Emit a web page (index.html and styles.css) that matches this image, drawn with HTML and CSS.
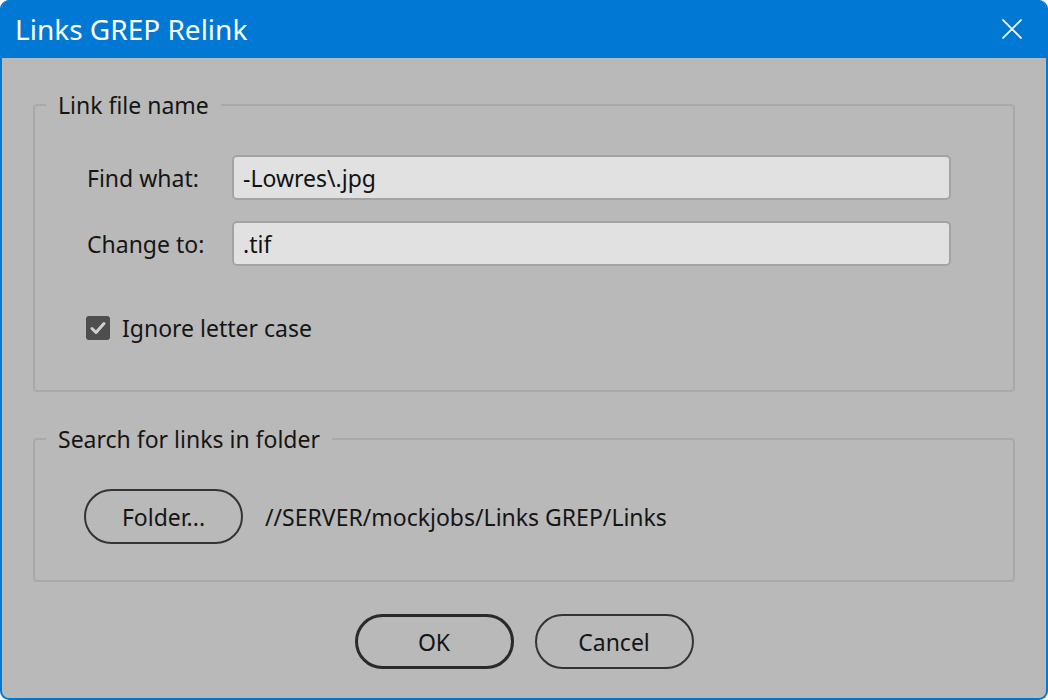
FILE: index.html
```html
<!DOCTYPE html>
<html lang="en">
<head>
    <meta charset="UTF-8">
    <title>Links GREP Relink</title>
    <link rel="stylesheet" href="styles.css">
</head>
<body>
    <div class="dialog">
        <header class="title-bar">
            <h1 class="title">Links GREP Relink</h1>
            <button class="close-btn" aria-label="Close">
                <svg width="20" height="20" viewBox="0 0 20 20"><path d="M0.5 0.5 L19.5 19.5 M19.5 0.5 L0.5 19.5" stroke="#fff" stroke-width="1.6" fill="none"/></svg>
            </button>
        </header>

        <div class="dialog-body">
            <fieldset class="group group-name">
                <legend>Link file name</legend>
                <div class="group-content name-content">
                    <div class="field-row">
                        <label class="field-label" for="find">Find what:</label>
                        <input class="field-input" id="find" type="text" value="-Lowres\.jpg">
                    </div>
                    <div class="field-row">
                        <label class="field-label" for="change">Change to:</label>
                        <input class="field-input" id="change" type="text" value=".tif">
                    </div>
                    <label class="check-row">
                        <span class="check-box">
                            <svg width="16" height="14" viewBox="0 0 16 14"><path d="M2 7.5 L6 11.5 L14 2.5" stroke="#cfcfcf" stroke-width="3" fill="none" stroke-linecap="round" stroke-linejoin="round"/></svg>
                        </span>
                        Ignore letter case
                    </label>
                </div>
            </fieldset>

            <fieldset class="group group-folder">
                <legend>Search for links in folder</legend>
                <div class="group-content folder-row">
                    <button class="pill-btn">Folder...</button>
                    <span class="folder-path">//SERVER/mockjobs/Links GREP/Links</span>
                </div>
            </fieldset>

            <div class="actions">
                <button class="pill-btn default">OK</button>
                <button class="pill-btn">Cancel</button>
            </div>
        </div>
    </div>
</body>
</html>
```

FILE: styles.css
```css
* { margin: 0; padding: 0; box-sizing: border-box; }
body { background: #fff; font-family: "Noto Sans", "Open Sans", sans-serif; color: #151515; }

.dialog { width: 1048px; height: 700px; background: #b9b9b9; border: 2px solid #0078d4; border-top: 0; border-radius: 9px; overflow: hidden; display: flex; flex-direction: column; }

.title-bar { height: 58px; background: #0078d4; display: flex; align-items: center; justify-content: space-between; padding: 0 24px 0 13px; flex-shrink: 0; }
.title { color: #fff; font-size: 28px; font-weight: normal; }
.close-btn { background: none; border: 0; width: 20px; height: 20px; display: flex; }

.dialog-body { flex: 1; padding: 32px 31px 0 31px; display: flex; flex-direction: column; }

.group { border: 2px solid #a9a9a9; border-radius: 4px; padding: 0 0 0 11px; }
.group legend { font-size: 23px; line-height: 30px; padding: 0 12px; }
.group-content { padding-left: 41px; }

.group-name { height: 302px; }
.name-content { padding: 35px 62px 0 41px; display: flex; flex-direction: column; gap: 21px; }
.group-folder { margin-top: 32px; height: 158px; }
.folder-row { padding: 35px 0 0 38px; display: flex; align-items: center; gap: 22px; }

.field-row { display: flex; align-items: center; }
.field-label { width: 145px; font-size: 23px; }
.field-input { flex: 1; height: 45px; background: #e1e1e1; border: 2px solid #a3a3a3; border-radius: 5px; padding: 0 9px; font-family: inherit; font-size: 23px; color: #111; outline: none; }

.check-row { display: flex; align-items: center; gap: 12px; font-size: 23px; margin-top: 25px; margin-left: -1px; }
.check-box { width: 24px; height: 24px; background: #4e4e4e; border-radius: 3px; display: flex; align-items: center; justify-content: center; }

.folder-path { font-size: 23px; }

.pill-btn { width: 159px; height: 55px; border: 2px solid #333; border-radius: 28px; background: transparent; font-family: inherit; font-size: 23px; color: #151515; }
.pill-btn.default { border: 3px solid #2a2a2a; }

.actions { display: flex; justify-content: center; gap: 21px; margin-top: 32px; }
```
